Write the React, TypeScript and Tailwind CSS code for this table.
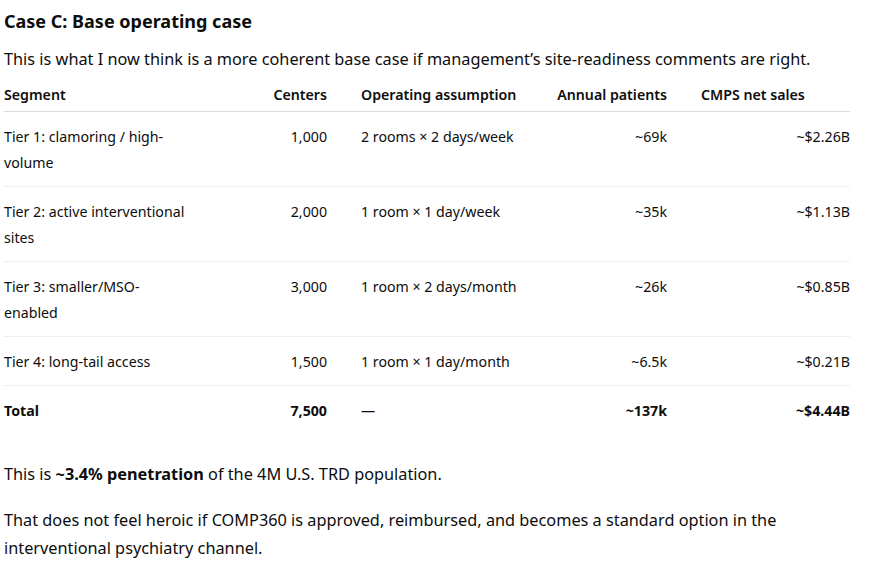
const rows = [
  { seg: "Tier 1: clamoring / high-volume", centers: "1,000", op: "2 rooms × 2 days/week", patients: "~69k", sales: "~$2.26B" },
  { seg: "Tier 2: active interventional sites", centers: "2,000", op: "1 room × 1 day/week", patients: "~35k", sales: "~$1.13B" },
  { seg: "Tier 3: smaller/MSO-enabled", centers: "3,000", op: "1 room × 2 days/month", patients: "~26k", sales: "~$0.85B" },
  { seg: "Tier 4: long-tail access", centers: "1,500", op: "1 room × 1 day/month", patients: "~6.5k", sales: "~$0.21B" },
];

export default function App() {
  return (
    <div className="min-h-screen bg-white pl-[4px] text-[#0d0d0d]" style={{ fontFamily: '"Noto Sans", sans-serif' }}>
      <h3 className="pt-[7px] text-[18px] font-bold leading-[28px]">Case C: Base operating case</h3>
      <p className="mt-[10px] text-[16.3px] leading-[28px]">
        This is what I now think is a more coherent base case if management’s site-readiness comments are right.
      </p>

      <table className="mt-[9px] w-[846px] table-fixed border-collapse text-[14.2px] leading-[26px]">
        <colgroup>
          <col className="w-[202px]" />
          <col className="w-[138px]" />
          <col className="w-[190px]" />
          <col className="w-[150px]" />
          <col className="w-[166px]" />
        </colgroup>
        <thead>
          <tr className="border-b border-[#dcdcdc]">
            <th className="pb-[3px] pr-[17px] text-left font-semibold">Segment</th>
            <th className="px-[17px] pb-[3px] text-right font-semibold">Centers</th>
            <th className="px-[17px] pb-[3px] text-left font-semibold">Operating assumption</th>
            <th className="px-[17px] pb-[3px] text-right font-semibold">Annual patients</th>
            <th className="pb-[3px] pl-[17px] text-left font-semibold">CMPS net sales</th>
          </tr>
        </thead>
        <tbody>
          {rows.map((r) => (
            <tr key={r.seg} className="border-b border-[#efefef] align-top">
              <td className="pb-[10px] pr-[17px] pt-[12px]">{r.seg}</td>
              <td className="px-[17px] pb-[10px] pt-[12px] text-right">{r.centers}</td>
              <td className="px-[17px] pb-[10px] pt-[12px]">{r.op}</td>
              <td className="px-[17px] pb-[10px] pt-[12px] text-right">{r.patients}</td>
              <td className="pb-[10px] pl-[17px] pt-[12px] text-right">{r.sales}</td>
            </tr>
          ))}
          <tr className="align-top font-bold">
            <td className="pb-[10px] pr-[17px] pt-[12px]">Total</td>
            <td className="px-[17px] pb-[10px] pt-[12px] text-right">7,500</td>
            <td className="px-[17px] pb-[10px] pt-[12px] font-normal">—</td>
            <td className="px-[17px] pb-[10px] pt-[12px] text-right">~137k</td>
            <td className="pb-[10px] pl-[17px] pt-[12px] text-right">~$4.44B</td>
          </tr>
        </tbody>
      </table>

      <p className="mt-[26px] text-[16.3px] leading-[28px]">
        This is <strong className="font-bold">~3.4% penetration</strong> of the 4M U.S. TRD population.
      </p>
      <p className="mt-[18px] w-[800px] text-[16.3px] leading-[28px]">
        That does not feel heroic if COMP360 is approved, reimbursed, and becomes a standard option in the interventional psychiatry channel.
      </p>
    </div>
  );
}
